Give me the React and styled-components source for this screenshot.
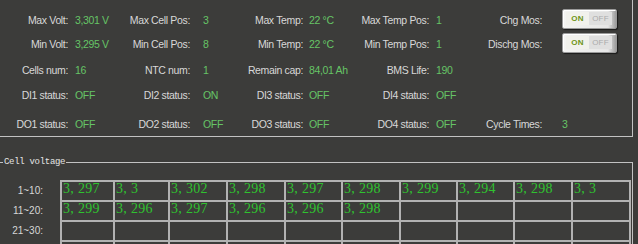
import React from 'react';
import styled, { createGlobalStyle } from 'styled-components';

const Global = createGlobalStyle`
  html, body { margin: 0; padding: 0; background: #3c3c3a; overflow: hidden; }
  body { width: 638px; height: 244px; }
`;

const Page = styled.div`
  width: 638px;
  height: 244px;
  overflow: hidden;
  display: flex;
  flex-direction: column;
  font-family: "Liberation Sans", Arial, sans-serif;
`;

const GroupBox = styled.fieldset`
  box-sizing: border-box;
  width: 637px;
  min-width: 0;
  flex-shrink: 0;
  margin: ${(p) => p.$mt}px 0 0 -4px;
  padding: ${(p) => p.$pt}px 0 ${(p) => p.$pb}px 3px;
  border: 1px solid #c2c2c2;
`;

const Legend = styled.legend`
  margin-left: 3px;
  padding: 0 1px;
  font-family: "Liberation Mono", "Courier New", monospace;
  font-size: 9px;
  line-height: 10px;
  letter-spacing: -0.3px;
  color: #e4e4e4;
`;

const InfoGrid = styled.div`
  display: grid;
  grid-template-columns: 68px 50px 72px 50px 63px 47px 79px 41px 72px 1fr;
  grid-template-rows: 24px 26px 25px 29px 20px;
  align-items: start;
`;

const Label = styled.div`
  height: 20px;
  line-height: 20px;
  text-align: right;
  white-space: nowrap;
  font-size: 10.5px;
  letter-spacing: -0.35px;
  color: #d8d8d8;
`;

const Value = styled.div`
  height: 20px;
  line-height: 20px;
  padding-left: ${(p) => p.$pl}px;
  white-space: nowrap;
  font-size: 10.5px;
  letter-spacing: -0.35px;
  color: #66c466;
`;

const Toggle = styled.div`
  display: flex;
  box-sizing: border-box;
  width: 55px;
  height: 20px;
  margin-top: -1px;
  padding: 2px 4px 3px 3px;
  border: 1px solid #9a9a9a;
  border-radius: 2px;
  background: linear-gradient(90deg, #f4f4f2 0%, #e6e6e6 85%, #9c9c9c 100%);
  box-shadow: 1px 1px 1px rgba(0, 0, 0, 0.55), inset 1px 1px 0 #ffffff;
`;

const ToggleHalf = styled.div`
  flex: 1;
  display: flex;
  align-items: center;
  justify-content: center;
  font-size: 8px;
  font-weight: ${(p) => (p.$on ? 700 : 400)};
  letter-spacing: 0.2px;
  color: ${(p) => (p.$on ? '#6d9416' : '#ababab')};
  background: ${(p) => (p.$on ? '#f1f1ec' : '#dfdfdf')};
`;

const CellArea = styled.div`
  display: flex;
  gap: 17px;
`;

const RowLabels = styled.div`
  width: 43px;
  display: flex;
  flex-direction: column;
  margin-top: 1px;
`;

const RowLabel = styled.div`
  height: 20px;
  line-height: 20px;
  text-align: right;
  font-size: 10px;
  color: #d6d6d6;
  white-space: nowrap;
`;

const VoltTable = styled.div`
  display: grid;
  grid-template-columns: 51px 53px 56px 56px 55px 56px 55px 55px 56px 56px;
  grid-auto-rows: 18px;
  gap: 2px;
  padding: 2px;
  background: #b2b2b2;
`;

const VCell = styled.div`
  background: #3c3c3a;
  color: #2fc22f;
  font-family: "Liberation Serif", "Times New Roman", serif;
  font-size: 14px;
  line-height: 14px;
  letter-spacing: 0.3px;
  padding-left: 1px;
  white-space: nowrap;
  overflow: hidden;
`;

const TOGGLE = 'toggle';
const rows = [
  [['Max Volt:', '3,301 V'], ['Max Cell Pos:', '3'], ['Max Temp:', '22 °C'], ['Max Temp Pos:', '1'], ['Chg Mos:', TOGGLE]],
  [['Min Volt:', '3,295 V'], ['Min Cell Pos:', '8'], ['Min Temp:', '22 °C'], ['Min Temp Pos:', '1'], ['Dischg Mos:', TOGGLE]],
  [['Cells num:', '16'], ['NTC num:', '1'], ['Remain cap:', '84,01 Ah'], ['BMS Life:', '190'], null],
  [['DI1 status:', 'OFF'], ['DI2 status:', 'ON'], ['DI3 status:', 'OFF'], ['DI4 status:', 'OFF'], null],
  [['DO1 status:', 'OFF'], ['DO2 status:', 'OFF'], ['DO3 status:', 'OFF'], ['DO4 status:', 'OFF'], ['Cycle Times:', '3']],
];
const valuePad = [7, 13, 6, 7, 20];

const voltRows = [
  { label: '1~10:', cells: ['3, 297', '3, 3', '3, 302', '3, 298', '3, 297', '3, 298', '3, 299', '3, 294', '3, 298', '3, 3'] },
  { label: '11~20:', cells: ['3, 299', '3, 296', '3, 297', '3, 296', '3, 296', '3, 298', '', '', '', ''] },
  { label: '21~30:', cells: ['', '', '', '', '', '', '', '', '', ''] },
  { label: '', cells: ['', '', '', '', '', '', '', '', '', ''] },
];

function MosToggle() {
  return (
    <Toggle>
      <ToggleHalf $on>ON</ToggleHalf>
      <ToggleHalf>OFF</ToggleHalf>
    </Toggle>
  );
}

export default function App() {
  return (
    <Page>
      <Global />
      <GroupBox $mt={-4} $pt={13} $pb={2}>
        <InfoGrid>
          {rows.map((row, r) =>
            row.map((item, c) =>
              item ? (
                <React.Fragment key={`${r}-${c}`}>
                  <Label>{item[0]}</Label>
                  <Value $pl={valuePad[c]}>{item[1] === TOGGLE ? <MosToggle /> : item[1]}</Value>
                </React.Fragment>
              ) : (
                <React.Fragment key={`${r}-${c}`}>
                  <Label />
                  <Value $pl={valuePad[c]} />
                </React.Fragment>
              )
            )
          )}
        </InfoGrid>
      </GroupBox>
      <GroupBox $mt={20} $pt={13} $pb={0}>
        <Legend>Cell voltage</Legend>
        <CellArea>
          <RowLabels>
            {voltRows.map((r, i) => (
              <RowLabel key={i}>{r.label}</RowLabel>
            ))}
          </RowLabels>
          <VoltTable>
            {voltRows.map((r, ri) =>
              r.cells.map((v, ci) => <VCell key={`${ri}-${ci}`}>{v}</VCell>)
            )}
          </VoltTable>
        </CellArea>
      </GroupBox>
    </Page>
  );
}
